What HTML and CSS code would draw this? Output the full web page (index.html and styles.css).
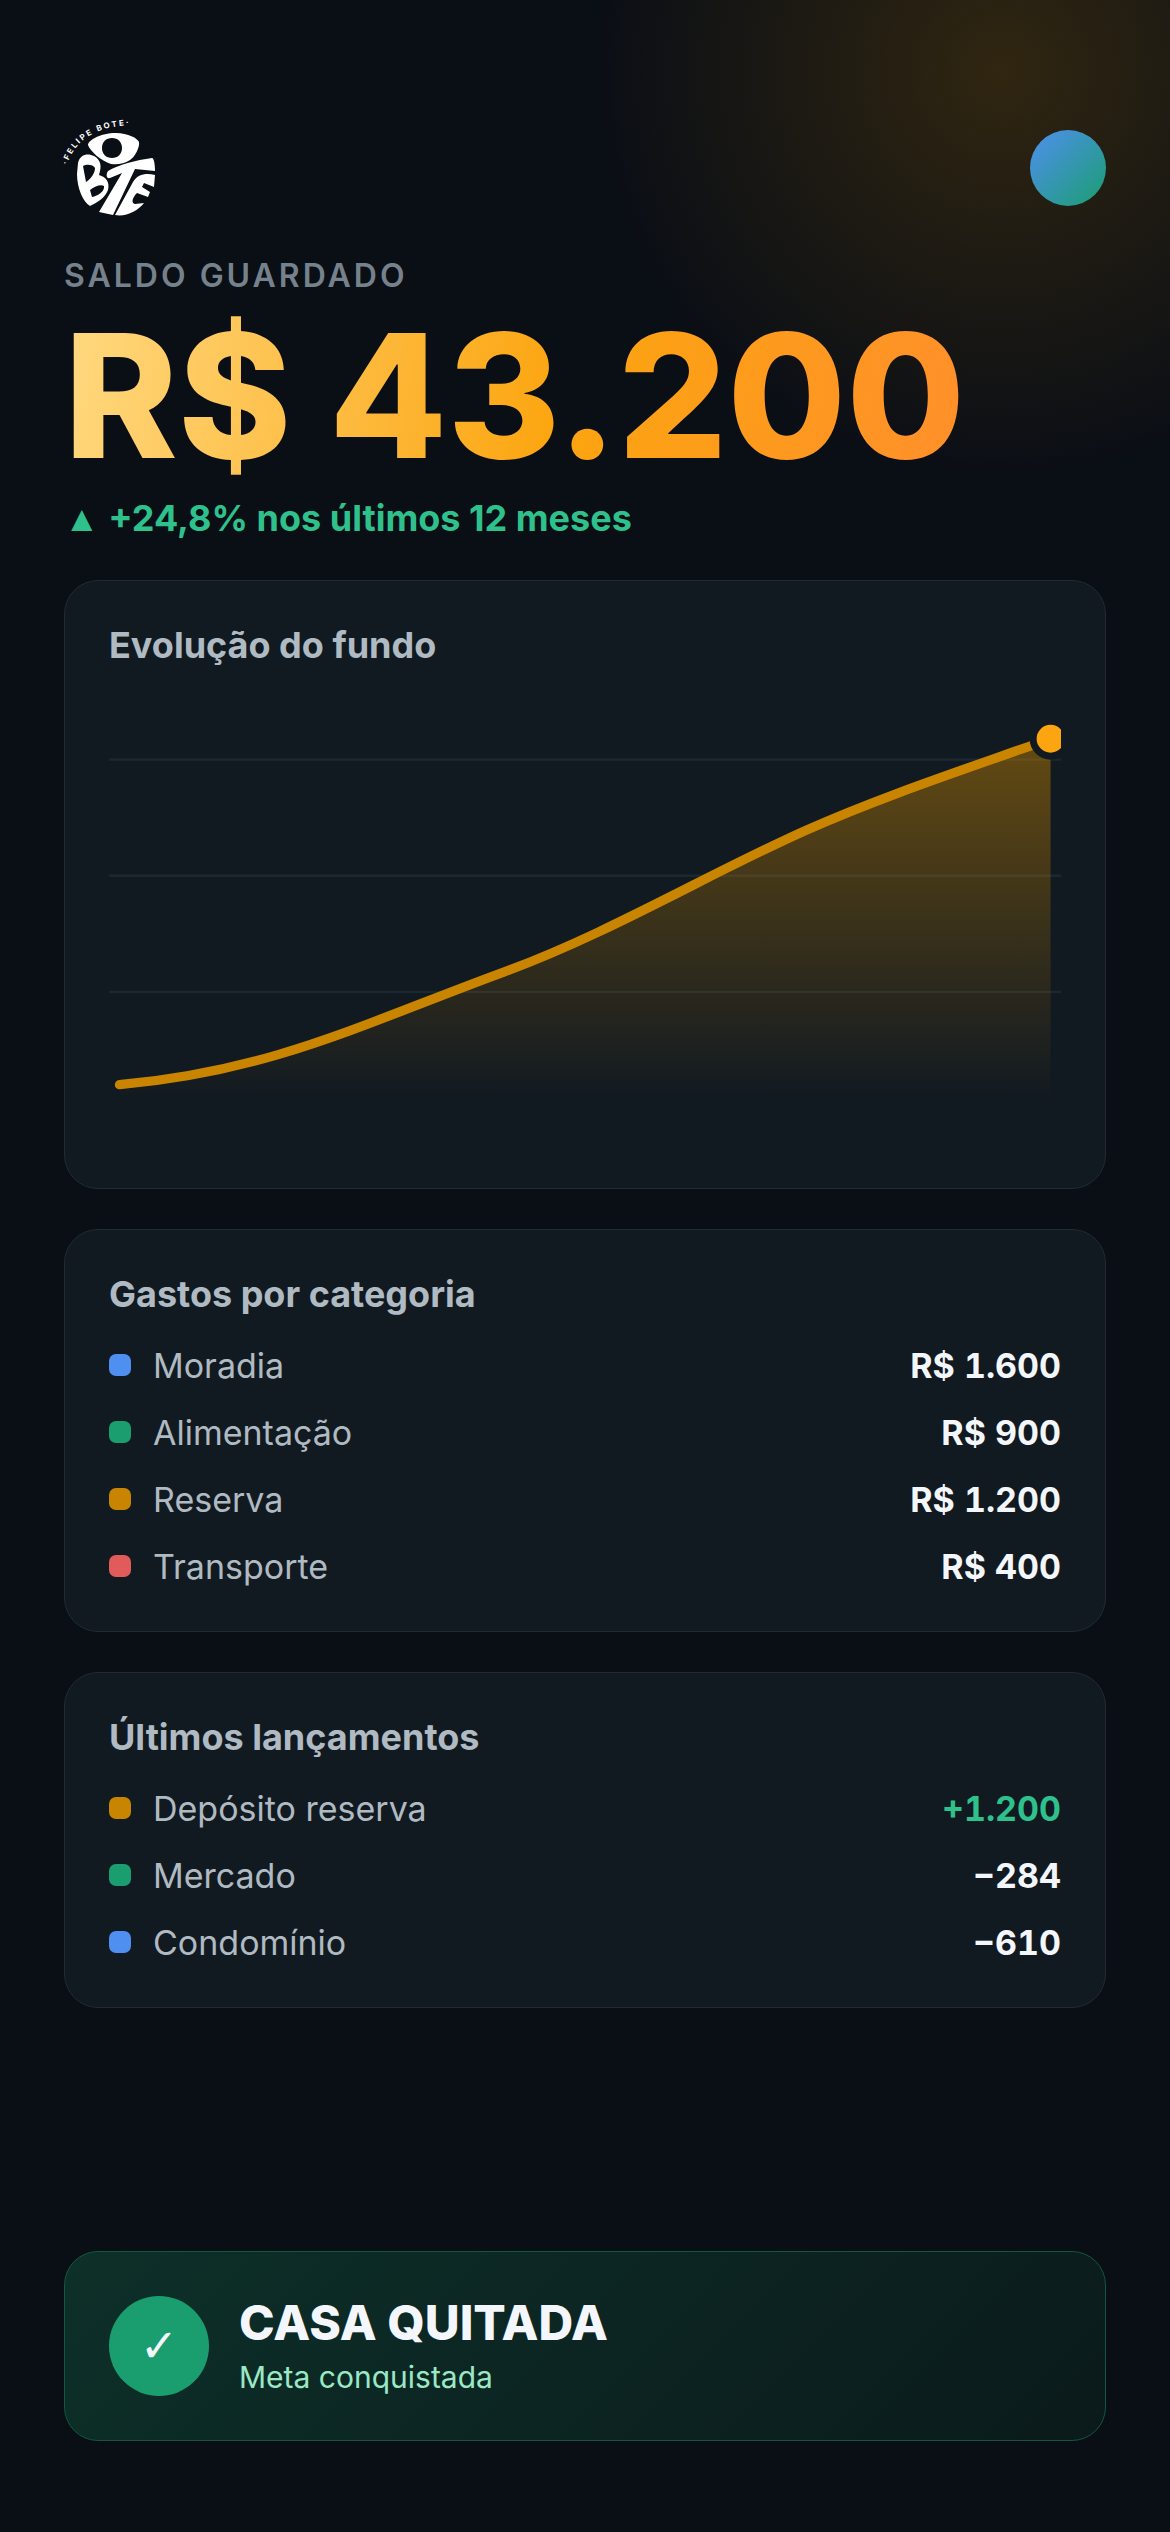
FILE: index.html
```html
<!DOCTYPE html>
<html lang="pt-BR">
<head>
    <meta charset="UTF-8">
    <meta name="viewport" content="width=device-width, initial-scale=1.0">
    <title>Saldo guardado</title>
    <link rel="stylesheet" href="styles.css">
</head>
<body>
    <header class="header">
        <svg class="logo" viewBox="0 0 92 96" role="img" aria-label="Felipe Bote">
            <defs>
                <path id="arc" d="M3 45 C9 26 24 6 70 5"/>
            </defs>
            <text class="logo-text"><textPath href="#arc">·FELIPE BOTE·</textPath></text>
            <path fill-rule="evenodd" d="M24 25 C24 21 34 14 49 13 C62 12 74 18 75 22 C76 27 71 37 66 40 C60 44 53 45 47 44 C37 41 26 31 24 25 Z M48 18 C42 18 38 22 38 28 C38 34 42 38 48 38 C54 38 58 34 58 28 C58 22 54 18 48 18 Z"/>
            <path fill-rule="evenodd" d="M14 43 C16 34 24 33 30 36 C37 40 38 46 35 55 C42 57 46 62 44 70 C41 78 34 82 26 86 C19 82 13 68 13 54 Z M19 46 L22 62 C27 59 31 53 31 48 C29 44 22 44 19 46 Z M26 70 L28 77 C34 76 41 71 40 66 C37 64 31 66 26 70 Z"/>
            <path d="M44 51 C54 45 72 40 88 38 C90 38 91 45 91 51 L71 49 L49 95 L35 92 L58 53 L46 58 C42 59 42 54 44 51 Z"/>
            <path d="M91 55 L90 67 L80 63 L78 67 L86 72 L84 77 L73 73 C68 78 67 83 71 84 L80 83 C74 91 62 97 51 95 L69 62 C74 54 82 53 91 55 Z"/>
        </svg>
        <div class="avatar"></div>
    </header>

    <main class="content">
        <section class="balance">
            <p class="balance-label">SALDO GUARDADO</p>
            <h1 class="balance-value">R$ 43.200</h1>
            <p class="balance-delta"><span class="arrow">▲</span> +24,8% nos últimos 12 meses</p>
        </section>

        <section class="card">
            <h2>Evolução do fundo</h2>
            <svg class="chart" viewBox="0 0 820 391">
                <defs>
                    <linearGradient id="area" x1="0" y1="0" x2="0" y2="1">
                        <stop offset="0" stop-color="#c98500" stop-opacity="0.45"/>
                        <stop offset="1" stop-color="#c98500" stop-opacity="0"/>
                    </linearGradient>
                </defs>
                <g stroke="#1c2831" stroke-width="2">
                    <line x1="0" y1="60" x2="820" y2="60"/>
                    <line x1="0" y1="160" x2="820" y2="160"/>
                    <line x1="0" y1="260" x2="820" y2="260"/>
                </g>
                <path fill="url(#area)" d="M9 340 C140 328 215 289 340 243 C430 210 515 159 600 121 C665 92 735 69 811 42 V350 H9 Z"/>
                <path fill="none" stroke="#c98500" stroke-width="8" stroke-linecap="round" d="M9 340 C140 328 215 289 340 243 C430 210 515 159 600 121 C665 92 735 69 811 42"/>
                <circle cx="811" cy="42" r="15" fill="#fca510" stroke="#121a21" stroke-width="6"/>
            </svg>
        </section>

        <section class="card">
            <h2>Gastos por categoria</h2>
            <ul class="list">
                <li><span class="dot blue"></span>Moradia<strong>R$ 1.600</strong></li>
                <li><span class="dot green"></span>Alimentação<strong>R$ 900</strong></li>
                <li><span class="dot gold"></span>Reserva<strong>R$ 1.200</strong></li>
                <li><span class="dot red"></span>Transporte<strong>R$ 400</strong></li>
            </ul>
        </section>

        <section class="card">
            <h2>Últimos lançamentos</h2>
            <ul class="list">
                <li><span class="dot gold"></span>Depósito reserva<strong class="income">+1.200</strong></li>
                <li><span class="dot green"></span>Mercado<strong>−284</strong></li>
                <li><span class="dot blue"></span>Condomínio<strong>−610</strong></li>
            </ul>
        </section>
    </main>

    <footer class="goal">
        <div class="goal-check">✓</div>
        <div>
            <p class="goal-title">CASA QUITADA</p>
            <p class="goal-sub">Meta conquistada</p>
        </div>
    </footer>
</body>
</html>
```

FILE: styles.css
```css
:root {
    --bg: #0a0e15;
    --card: #121a21;
    --line: #212b31;
    --text: #f3f6fa;
    --muted: #b0bac2;
    --blue: #4f8ff0;
    --green: #1a9e70;
    --gold: #c98500;
    --red: #e15b5b;
    --mint: #2fc18c;
}

* {
    margin: 0;
    padding: 0;
    box-sizing: border-box;
}

body {
    background: radial-gradient(circle at calc(100% - 168px) 70px, rgba(201, 133, 0, 0.2), rgba(201, 133, 0, 0) 410px), var(--bg);
    color: var(--text);
    font-family: 'Inter', sans-serif;
    min-height: 100vh;
    padding: 120px 64px 91px;
    display: flex;
    flex-direction: column;
    gap: 40px;
}

.header {
    display: flex;
    align-items: center;
    justify-content: space-between;
}

.logo {
    width: 92px;
    height: 96px;
    fill: #fff;
    overflow: visible;
}

.logo-text {
    font-size: 8px;
    font-weight: 700;
    letter-spacing: 2px;
}

.avatar {
    width: 76px;
    height: 76px;
    border-radius: 50%;
    background: linear-gradient(135deg, var(--blue), var(--green));
}

.content {
    display: flex;
    flex-direction: column;
    gap: 40px;
}

.balance-label {
    color: #75828c;
    font-size: 32px;
    font-weight: 600;
    line-height: 40px;
    letter-spacing: 3px;
}

.balance-value {
    width: fit-content;
    margin: 8px 0 10px;
    font-size: 172px;
    font-weight: 800;
    line-height: 182px;
    white-space: nowrap;
    background: linear-gradient(100deg, #ffd980, #fca510 55%, #ff8f2b);
    background-clip: text;
    -webkit-background-clip: text;
    color: transparent;
}

.balance-delta {
    color: var(--mint);
    font-size: 36px;
    font-weight: 700;
    line-height: 44px;
}

.arrow {
    font-family: 'Liberation Sans', sans-serif;
    line-height: 1;
}

.card {
    background: var(--card);
    border: 1px solid var(--line);
    border-radius: 34px;
    padding: 44px;
}

.card h2 {
    color: var(--muted);
    font-size: 36px;
    font-weight: 700;
    line-height: 40px;
}

.chart {
    display: block;
    width: 100%;
    margin-top: 25px;
}

.list {
    list-style: none;
    display: flex;
    flex-direction: column;
    gap: 26px;
    margin-top: 31px;
}

.list li {
    display: flex;
    align-items: center;
    gap: 22px;
    color: var(--muted);
    font-size: 34px;
    line-height: 41px;
}

.list strong {
    margin-left: auto;
    color: var(--text);
    font-weight: 700;
    font-variant-numeric: tabular-nums;
}

.list .income {
    color: var(--mint);
}

.dot {
    width: 22px;
    height: 22px;
    border-radius: 7px;
}

.blue {
    background: var(--blue);
}

.green {
    background: var(--green);
}

.gold {
    background: var(--gold);
}

.red {
    background: var(--red);
}

.goal {
    display: flex;
    align-items: center;
    gap: 30px;
    margin-top: auto;
    padding: 44px;
    border: 1px solid #125741;
    border-radius: 34px;
    background: linear-gradient(135deg, #0d3029, #0b1a1b);
}

.goal-check {
    display: flex;
    align-items: center;
    justify-content: center;
    width: 100px;
    height: 100px;
    border-radius: 50%;
    background: var(--green);
    font-family: 'DejaVu Sans', sans-serif;
    font-size: 46px;
}

.goal-title {
    font-size: 48px;
    font-weight: 800;
    line-height: 52px;
}

.goal-sub {
    color: #9be8c4;
    font-size: 30px;
    line-height: 36px;
    margin-top: 10px;
}
```
